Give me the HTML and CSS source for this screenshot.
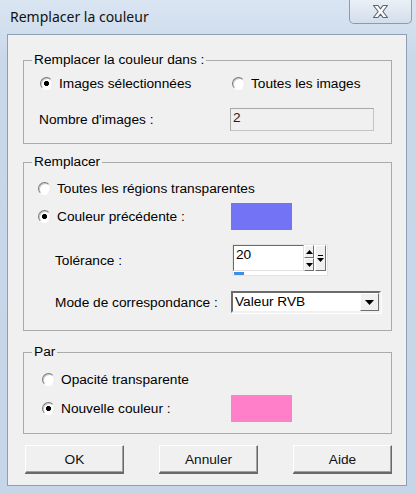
FILE: index.html
```html
<!DOCTYPE html>
<html>
<head>
    <title>Remplacer la couleur</title>
    <link rel="stylesheet" href="styles.css">
</head>
<body>
    <div class="window">
        <div class="titlebar">
            <span class="title">Remplacer la couleur</span>
            <div class="close">
                <svg width="17" height="15" viewBox="0 0 17 15">
                    <path d="M1.5 1.5 H6 L8.5 4.8 L11 1.5 H15.5 L10.8 7.5 L15.5 13.5 H11 L8.5 10.2 L6 13.5 H1.5 L6.2 7.5 Z"
                          fill="#fdfdfd" stroke="#5c6470" stroke-width="1.1" stroke-linejoin="round"/>
                </svg>
            </div>
        </div>

        <div class="client">
            <fieldset class="group g1">
                <legend>Remplacer la couleur dans :</legend>
                <div class="row opts">
                    <label class="opt wide"><span class="radio on"></span>Images sélectionnées</label>
                    <label class="opt"><span class="radio"></span>Toutes les images</label>
                </div>
                <div class="row split count">
                    <span class="lbl">Nombre d'images :</span>
                    <span class="field">2</span>
                </div>
            </fieldset>

            <fieldset class="group g2">
                <legend>Remplacer</legend>
                <div class="row first">
                    <label class="opt"><span class="radio"></span>Toutes les régions transparentes</label>
                </div>
                <div class="row split swatch-row">
                    <label class="opt"><span class="radio on"></span>Couleur précédente :</label>
                    <span class="swatch blue"></span>
                </div>
                <div class="row split spin-row">
                    <span class="lbl">Tolérance :</span>
                    <div class="spin">
                        <div class="spin-top">
                            <span class="spin-edit">20</span>
                            <span class="spin-arrows">
                                <span class="sbtn"><svg width="7" height="4" viewBox="0 0 7 4"><path d="M3.5 0 L7 4 H0 Z" fill="#000"/></svg></span>
                                <span class="sbtn"><svg width="7" height="4" viewBox="0 0 7 4"><path d="M0 0 H7 L3.5 4 Z" fill="#000"/></svg></span>
                            </span>
                            <span class="sbtn tall"><svg width="7" height="7" viewBox="0 0 7 7"><path d="M1 0 H6 V1 H1 Z M0 3 H7 L3.5 7 Z" fill="#000"/></svg></span>
                        </div>
                        <div class="spin-bottom"><span class="spin-bar"></span></div>
                    </div>
                </div>
                <div class="row split mode-row">
                    <span class="lbl">Mode de correspondance :</span>
                    <div class="combo">
                        <span class="combo-text">Valeur RVB</span>
                        <span class="combo-btn"><svg width="9" height="5" viewBox="0 0 9 5"><path d="M0 0 H9 L4.5 5 Z" fill="#000"/></svg></span>
                    </div>
                </div>
            </fieldset>

            <fieldset class="group g3">
                <legend>Par</legend>
                <div class="row first">
                    <label class="opt"><span class="radio"></span>Opacité transparente</label>
                </div>
                <div class="row split swatch-row">
                    <label class="opt"><span class="radio on"></span>Nouvelle couleur :</label>
                    <span class="swatch pink"></span>
                </div>
            </fieldset>

            <div class="buttons">
                <button type="button">OK</button>
                <button type="button">Annuler</button>
                <button type="button">Aide</button>
            </div>
        </div>
    </div>
</body>
</html>
```

FILE: styles.css
```css
* {
    box-sizing: border-box;
}

body {
    margin: 0;
    font-family: "Liberation Sans", Arial, sans-serif;
    font-size: 13.7px;
    color: #000;
}

.window {
    width: 416px;
    height: 494px;
    padding: 0 9px 8px 7px;
    display: flex;
    flex-direction: column;
    background: linear-gradient(#dae5f2, #c9d8e9 60px, #c6d5e7);
}

.titlebar {
    height: 34px;
    display: flex;
    justify-content: space-between;
    align-items: flex-start;
}

.title {
    font-family: "Noto Sans", "Open Sans", sans-serif;
    font-size: 14px;
    color: #111;
    margin: 7px 0 0 3px;
}

.close {
    width: 63px;
    height: 24px;
    margin-right: -5px;
    border: 1px solid #8a9ab0;
    border-top: none;
    border-radius: 0 0 5px 5px;
    background: linear-gradient(#eaf0f7, #d3deeb);
    display: flex;
    align-items: center;
    justify-content: center;
    padding-bottom: 1px;
}

.client {
    flex: 1;
    background: #f0f0f0;
    border: 1px solid #8d9fb5;
    padding: 17px 14px 0 15px;
}

/* group boxes */

.group {
    margin: 0;
    min-width: 0;
    border: 1px solid #aaaaaa;
    padding: 0;
}

.group legend {
    margin-left: 8px;
    padding: 0 2px;
    line-height: 16px;
}

.g1 {
    padding-bottom: 12px;
}

.g2 {
    margin-top: 10px;
    padding-bottom: 17px;
}

.g3 {
    margin-top: 13px;
    padding-bottom: 11px;
}

.row {
    display: flex;
    align-items: center;
}

.row.split {
    display: grid;
    grid-template-columns: 207px auto;
    align-items: center;
}

.opts {
    height: 24px;
    margin-top: 3px;
    padding-left: 16px;
}

.count {
    height: 23px;
    margin-top: 13px;
}

.count .lbl {
    padding-left: 15px;
}

.g2 .first {
    height: 20px;
    margin-top: 8px;
    padding-left: 14px;
}

.g2 .swatch-row {
    height: 27px;
    margin-top: 5px;
}

.g2 .swatch-row .opt {
    padding-left: 14px;
}

.spin-row {
    height: 32px;
    margin-top: 14px;
}

.mode-row {
    height: 22px;
    margin-top: 15px;
}

.spin-row .lbl,
.mode-row .lbl {
    padding-left: 31px;
}

.g3 .first {
    height: 20px;
    margin-top: 9px;
    padding-left: 18px;
}

.g3 .swatch-row {
    height: 27px;
    margin-top: 6px;
}

.g3 .swatch-row .opt {
    padding-left: 18px;
}

/* radio buttons */

.opt {
    display: flex;
    align-items: center;
    gap: 6px;
    white-space: nowrap;
}

.opt.wide {
    width: 192px;
}

.radio {
    width: 13px;
    height: 13px;
    flex: none;
    border-radius: 50%;
    border: 1px solid;
    border-color: #7a7a7a #e8e8e8 #ffffff #7a7a7a;
    background: #fff;
    box-shadow: inset 1px 1px 0 #c8c8c8;
}

.radio.on {
    background: radial-gradient(circle, #000 2.2px, #fff 2.9px);
}

/* inputs */

.field {
    margin-left: -1px;
    width: 144px;
    height: 23px;
    border: 1px solid #c4c4c4;
    border-top-color: #a8a8a8;
    border-left-color: #a8a8a8;
    padding: 1px 2px;
    line-height: 15px;
    color: #222;
}

.swatch {
    width: 61px;
    height: 27px;
}

.swatch.blue {
    background: #7373f6;
}

.swatch.pink {
    background: #ff80c8;
}

.spin {
    margin-left: 1px;
    width: 96px;
    height: 32px;
    background: #fff;
    border: 1px solid #e4e4e4;
    display: flex;
    flex-direction: column;
}

.spin-top {
    display: flex;
    height: 26px;
}

.spin-edit {
    width: 71px;
    border: 1px solid;
    border-color: #6a6a6a #e0e0e0 #e0e0e0 #6a6a6a;
    padding: 1px 2px;
    line-height: 16px;
}

.spin-arrows {
    display: flex;
    flex-direction: column;
    width: 10px;
}

.sbtn {
    flex: 1;
    display: flex;
    align-items: center;
    justify-content: center;
    background: #f0f0f0;
    border: 1px solid;
    border-color: #fff #6e6e6e #6e6e6e #fff;
}

.sbtn.tall {
    flex: none;
    width: 11px;
    margin-left: 1px;
}

.spin-bottom {
    flex: 1;
    padding: 1px 0 0 1px;
}

.spin-bar {
    display: block;
    width: 10px;
    height: 3px;
    background: #3d8ee6;
}

.combo {
    width: 150px;
    height: 22px;
    background: #fff;
    border: 2px solid;
    border-color: #6b6b6b #f0f0f0 #f0f0f0 #6b6b6b;
    box-shadow: 1px 1px 0 #fff;
    display: flex;
    align-items: stretch;
}

.combo-text {
    flex: 1;
    padding-left: 2px;
    line-height: 18px;
}

.combo-btn {
    width: 19px;
    display: flex;
    align-items: center;
    justify-content: center;
    background: #f0f0f0;
    border: 1px solid;
    border-color: #fff #6e6e6e #6e6e6e #fff;
}

/* dialog buttons */

.buttons {
    display: flex;
    justify-content: space-between;
    margin-top: 11px;
    padding: 0 0 0 2px;
}

button {
    width: 99px;
    height: 28px;
    font-family: inherit;
    font-size: inherit;
    color: #111;
    background: #f0f0f0;
    border: 1px solid;
    border-color: #ffffff #696969 #696969 #ffffff;
    box-shadow: inset -1px -1px 0 #a0a0a0, 0 1px 0 #696969;
    padding: 0;
}
```
